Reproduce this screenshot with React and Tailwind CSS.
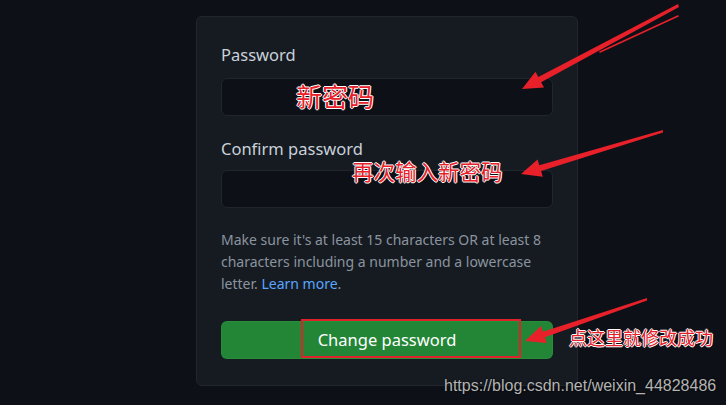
import React from "react";

const uiFont = { fontFamily: '"Noto Sans", "Open Sans", sans-serif' };
const cjk = '"Noto Sans CJK SC", "Noto Sans", sans-serif';

function Arrows() {
  return (
    <svg className="absolute inset-0 pointer-events-none" width="726" height="405" viewBox="0 0 726 405">
      <g fill="#e8202a">
        <polygon points="678,4 679,7 541.1,82.2 544,87.5 522,89 535.5,71.7 538.3,77" />
        <polygon points="663,130 663,132.5 541.1,171.1 542.8,176.8 521,174 537.6,159.6 539.3,165.3" />
        <polygon points="647,298 647,300.5 544.9,337.3 546.8,343 525,341 541,326 542.9,331.7" />
      </g>
      <path d="M678 16 L600 52" stroke="#e8202a" strokeWidth="1.6" fill="none" strokeLinecap="round" />
    </svg>
  );
}

function Note({ className, children }) {
  return (
    <div
      className={`absolute whitespace-nowrap text-[#e8202a] leading-none [text-shadow:1px_0_0_#fff,-1px_0_0_#fff,0_1px_0_#fff,0_-1px_0_#fff] ${className}`}
      style={{ fontFamily: cjk }}
    >
      {children}
    </div>
  );
}

export default function App() {
  return (
    <div className="relative w-[726px] h-[405px] overflow-hidden bg-[#0d1117]" style={uiFont}>
      <div className="flex pl-[196px] pt-4">
        <div className="w-[382px] rounded-md border border-[#21262d] bg-[#161b22] px-6 pt-[26px] pb-[26px]">
          <label className="block text-[16.5px] leading-6 text-[#c9d1d9] mb-[11px]">Password</label>
          <div className="h-[38px] rounded-md border border-[#21262d] bg-[#0d1117]" />

          <label className="block text-[16.5px] leading-6 text-[#c9d1d9] mt-[21px] mb-[9px]">Confirm password</label>
          <div className="h-[38px] rounded-md border border-[#21262d] bg-[#0d1117]" />

          <p className="mt-[21px] text-[14px] leading-[22px] text-[#8b949e]">
            Make sure it's at least 15 characters OR at least 8 characters including a number and a lowercase letter.{" "}
            <a className="text-[#58a6ff]">Learn more</a>.
          </p>

          <button className="mt-[26px] flex h-[38px] w-full items-center justify-center rounded-md border border-[#2b9a3e]/40 bg-[#238636] text-[16.5px] text-white">
            Change password
          </button>
        </div>
      </div>

      <div className="absolute left-[301px] top-[319px] h-[39px] w-[220px] border-2 border-[#e0202a]" />

      <Arrows />

      <Note className="left-[296px] top-[83px] text-[26px]">新密码</Note>
      <Note className="left-[352px] top-[160px] text-[21.5px]">再次输入新密码</Note>
      <Note className="left-[569px] top-[328px] text-[18px]">点这里就修改成功</Note>

      <div
        className="absolute left-[444px] top-[376px] text-[16px] leading-5 text-[#b4b4b4] [text-shadow:0_0_2px_#000]"
        style={{ fontFamily: '"Liberation Sans", Arial, sans-serif' }}
      >
        https://blog.csdn.net/weixin_44828486
      </div>
    </div>
  );
}
